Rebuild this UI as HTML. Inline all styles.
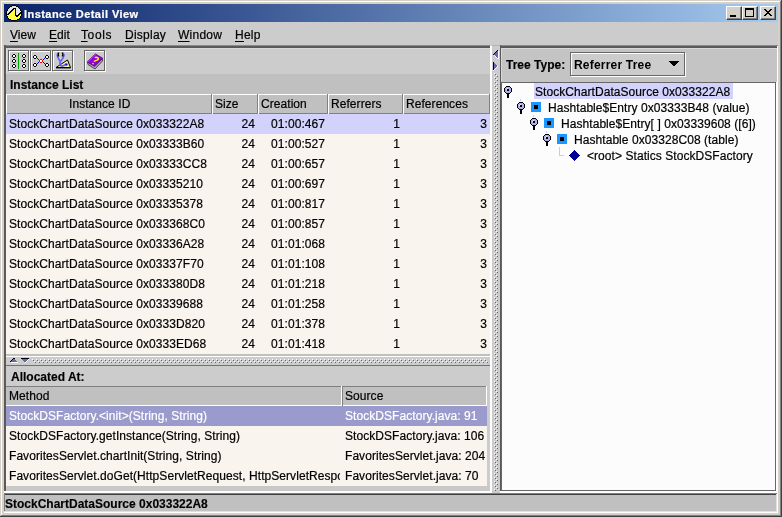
<!DOCTYPE html><html><head><meta charset="utf-8"><style>
html,body{margin:0;padding:0;}
body{width:782px;height:517px;overflow:hidden;position:relative;background:#d4d0c8;font-family:"Liberation Sans",sans-serif;font-size:12px;color:#000;}
#w{position:absolute;left:0;top:0;width:782px;height:517px;will-change:transform;}
div{position:absolute;box-sizing:border-box;}
.t{white-space:pre;line-height:14px;-webkit-text-stroke:0.2px currentColor;letter-spacing:0.06px;}
.u{text-decoration:underline;text-underline-offset:2px;}
</style></head><body><div id="w">
<div style="left:1px;top:1px;width:779px;height:1px;background:#fff;"></div>
<div style="left:1px;top:1px;width:1px;height:514px;background:#fff;"></div>
<div style="left:780px;top:1px;width:1px;height:515px;background:#808080;"></div>
<div style="left:1px;top:515px;width:780px;height:1px;background:#808080;"></div>
<div style="left:781px;top:0px;width:1px;height:517px;background:#404040;"></div>
<div style="left:0px;top:516px;width:782px;height:1px;background:#404040;"></div>
<div style="left:4px;top:4px;width:774px;height:18px;background:linear-gradient(to right,#0a246a,#a6caf0);"></div>
<svg style="position:absolute;left:6px;top:5px" width="16" height="16" viewBox="0 0 16 16" shape-rendering="crispEdges"><path fill="#000" d="M6 0h1v1h-1zM7 0h1v1h-1zM8 0h1v1h-1zM9 0h1v1h-1zM4 1h1v1h-1zM5 1h1v1h-1zM10 1h1v1h-1zM11 1h1v1h-1zM3 2h1v1h-1zM12 2h1v1h-1zM2 3h1v1h-1zM7 3h1v1h-1zM8 3h1v1h-1zM9 3h1v1h-1zM13 3h1v1h-1zM1 4h1v1h-1zM6 4h1v1h-1zM7 4h1v1h-1zM9 4h1v1h-1zM14 4h1v1h-1zM1 5h1v1h-1zM5 5h1v1h-1zM6 5h1v1h-1zM9 5h1v1h-1zM14 5h1v1h-1zM0 6h1v1h-1zM4 6h1v1h-1zM5 6h1v1h-1zM9 6h1v1h-1zM15 6h1v1h-1zM0 7h1v1h-1zM3 7h1v1h-1zM4 7h1v1h-1zM9 7h1v1h-1zM14 7h1v1h-1zM15 7h1v1h-1zM0 8h1v1h-1zM2 8h1v1h-1zM3 8h1v1h-1zM9 8h1v1h-1zM13 8h1v1h-1zM14 8h1v1h-1zM15 8h1v1h-1zM0 9h1v1h-1zM1 9h1v1h-1zM2 9h1v1h-1zM9 9h1v1h-1zM12 9h1v1h-1zM13 9h1v1h-1zM15 9h1v1h-1zM0 10h1v1h-1zM9 10h1v1h-1zM10 10h1v1h-1zM11 10h1v1h-1zM12 10h1v1h-1zM15 10h1v1h-1zM1 11h1v1h-1zM10 11h1v1h-1zM11 11h1v1h-1zM14 11h1v1h-1zM1 12h1v1h-1zM14 12h1v1h-1zM2 13h1v1h-1zM13 13h1v1h-1zM3 14h1v1h-1zM4 14h1v1h-1zM11 14h1v1h-1zM12 14h1v1h-1zM5 15h1v1h-1zM6 15h1v1h-1zM7 15h1v1h-1zM8 15h1v1h-1zM9 15h1v1h-1zM10 15h1v1h-1z"/><path fill="#e4e4e4" d="M6 1h1v1h-1zM7 1h1v1h-1zM8 1h1v1h-1zM9 1h1v1h-1zM4 2h1v1h-1zM5 2h1v1h-1zM6 2h1v1h-1zM7 2h1v1h-1zM8 2h1v1h-1zM9 2h1v1h-1zM10 2h1v1h-1zM11 2h1v1h-1zM3 3h1v1h-1zM4 3h1v1h-1zM5 3h1v1h-1zM6 3h1v1h-1zM10 3h1v1h-1zM11 3h1v1h-1zM12 3h1v1h-1zM2 4h1v1h-1zM3 4h1v1h-1zM4 4h1v1h-1zM5 4h1v1h-1zM10 4h1v1h-1zM11 4h1v1h-1zM12 4h1v1h-1zM13 4h1v1h-1zM2 5h1v1h-1zM3 5h1v1h-1zM4 5h1v1h-1zM10 5h1v1h-1zM11 5h1v1h-1zM12 5h1v1h-1zM13 5h1v1h-1zM1 6h1v1h-1zM2 6h1v1h-1zM3 6h1v1h-1zM10 6h1v1h-1zM11 6h1v1h-1zM12 6h1v1h-1zM13 6h1v1h-1zM14 6h1v1h-1zM1 7h1v1h-1zM2 7h1v1h-1zM10 7h1v1h-1zM11 7h1v1h-1zM12 7h1v1h-1zM13 7h1v1h-1zM1 8h1v1h-1zM10 8h1v1h-1zM11 8h1v1h-1zM12 8h1v1h-1zM10 9h1v1h-1zM11 9h1v1h-1z"/><path fill="#ffff3c" d="M8 4h1v1h-1zM7 5h1v1h-1zM8 5h1v1h-1zM6 6h1v1h-1zM7 6h1v1h-1zM8 6h1v1h-1zM5 7h1v1h-1zM6 7h1v1h-1zM7 7h1v1h-1zM8 7h1v1h-1zM4 8h1v1h-1zM5 8h1v1h-1zM6 8h1v1h-1zM7 8h1v1h-1zM8 8h1v1h-1zM3 9h1v1h-1zM4 9h1v1h-1zM5 9h1v1h-1zM6 9h1v1h-1zM7 9h1v1h-1zM8 9h1v1h-1zM14 9h1v1h-1zM1 10h1v1h-1zM2 10h1v1h-1zM3 10h1v1h-1zM4 10h1v1h-1zM5 10h1v1h-1zM6 10h1v1h-1zM7 10h1v1h-1zM8 10h1v1h-1zM13 10h1v1h-1zM14 10h1v1h-1zM2 11h1v1h-1zM3 11h1v1h-1zM4 11h1v1h-1zM5 11h1v1h-1zM6 11h1v1h-1zM7 11h1v1h-1zM8 11h1v1h-1zM9 11h1v1h-1zM12 11h1v1h-1zM13 11h1v1h-1zM2 12h1v1h-1zM3 12h1v1h-1zM4 12h1v1h-1zM5 12h1v1h-1zM6 12h1v1h-1zM7 12h1v1h-1zM8 12h1v1h-1zM9 12h1v1h-1zM10 12h1v1h-1zM11 12h1v1h-1zM12 12h1v1h-1zM13 12h1v1h-1zM3 13h1v1h-1zM4 13h1v1h-1zM5 13h1v1h-1zM6 13h1v1h-1zM7 13h1v1h-1zM8 13h1v1h-1zM9 13h1v1h-1zM10 13h1v1h-1zM11 13h1v1h-1zM12 13h1v1h-1zM5 14h1v1h-1zM6 14h1v1h-1zM7 14h1v1h-1zM8 14h1v1h-1zM9 14h1v1h-1zM10 14h1v1h-1z"/></svg>
<div class="t" style="left:24px;top:7px;color:#fff;font-weight:bold;font-size:11px;-webkit-text-stroke:0.2px currentColor;letter-spacing:0.45px;">Instance Detail View</div>
<div style="left:726px;top:6px;width:16px;height:14px;background:#d4d0c8;border-top:1px solid #fff;border-left:1px solid #fff;border-right:1px solid #404040;border-bottom:1px solid #404040;box-shadow:inset -1px -1px 0 #808080;"><div style="left:3px;top:8px;width:6px;height:2px;background:#000"></div></div>
<div style="left:742px;top:6px;width:16px;height:14px;background:#d4d0c8;border-top:1px solid #fff;border-left:1px solid #fff;border-right:1px solid #404040;border-bottom:1px solid #404040;box-shadow:inset -1px -1px 0 #808080;"><div style="left:2px;top:1px;width:9px;height:9px;border:1px solid #000;border-top-width:2px"></div></div>
<div style="left:760px;top:6px;width:16px;height:14px;background:#d4d0c8;border-top:1px solid #fff;border-left:1px solid #fff;border-right:1px solid #404040;border-bottom:1px solid #404040;box-shadow:inset -1px -1px 0 #808080;"><svg style="position:absolute;left:3px;top:2px" width="8" height="7" viewBox="0 0 8 7" shape-rendering="crispEdges"><path fill="#000" d="M0 0h1v1h-1zM1 0h1v1h-1zM6 0h1v1h-1zM7 0h1v1h-1zM1 1h1v1h-1zM2 1h1v1h-1zM5 1h1v1h-1zM6 1h1v1h-1zM2 2h1v1h-1zM3 2h1v1h-1zM4 2h1v1h-1zM5 2h1v1h-1zM3 3h1v1h-1zM4 3h1v1h-1zM2 4h1v1h-1zM3 4h1v1h-1zM4 4h1v1h-1zM5 4h1v1h-1zM1 5h1v1h-1zM2 5h1v1h-1zM5 5h1v1h-1zM6 5h1v1h-1zM0 6h1v1h-1zM1 6h1v1h-1zM6 6h1v1h-1zM7 6h1v1h-1z"/></svg></div>
<div style="left:4px;top:22px;width:774px;height:23px;background:#cccccc;"></div>
<div class="t" style="left:10px;top:28px;letter-spacing:0.06px"><span class="u">V</span>iew</div>
<div class="t" style="left:49px;top:28px;letter-spacing:0.06px"><span class="u">E</span>dit</div>
<div class="t" style="left:81px;top:28px;letter-spacing:0.6px"><span class="u">T</span>ools</div>
<div class="t" style="left:125px;top:28px;letter-spacing:0.25px"><span class="u">D</span>isplay</div>
<div class="t" style="left:178px;top:28px;letter-spacing:0.25px"><span class="u">W</span>indow</div>
<div class="t" style="left:235px;top:28px;letter-spacing:0.25px"><span class="u">H</span>elp</div>
<div style="left:4px;top:45px;width:488px;height:448px;background:#cccccc;"></div>
<div style="left:4px;top:45px;width:486px;height:1px;background:#8a8a8a;"></div>
<div style="left:4px;top:46px;width:486px;height:2px;background:#5a5a5a;"></div>
<div style="left:4px;top:45px;width:2px;height:446px;background:#5a5a5a;"></div>
<div style="left:6px;top:48px;width:1px;height:443px;background:#e0e0e0;"></div>
<div style="left:6px;top:48px;width:484px;height:1px;background:#d8d8d8;"></div>
<div style="left:490px;top:46px;width:2px;height:447px;background:#ffffff;"></div>
<div style="left:4px;top:491px;width:488px;height:2px;background:#ffffff;"></div>
<div style="left:8px;top:50px;width:22px;height:22px;"><div style="left:1px;top:1px;width:21px;height:21px;border:1px solid #fff"></div><div style="left:0;top:0;width:21px;height:21px;border:1px solid #666"></div><svg style="position:absolute;left:0;top:0" width="22" height="22" shape-rendering="crispEdges"><path fill="#000" d="M5 4h2v1h-2zM4 5h1v2h-1zM7 5h1v2h-1zM5 7h2v1h-2z"/><path fill="#fff" d="M5 5h2v2h-2z"/><path fill="#000" d="M5 9h2v1h-2zM4 10h1v2h-1zM7 10h1v2h-1zM5 12h2v1h-2z"/><path fill="#fff" d="M5 10h2v2h-2z"/><path fill="#000" d="M5 14h2v1h-2zM4 15h1v2h-1zM7 15h1v2h-1zM5 17h2v1h-2z"/><path fill="#fff" d="M5 15h2v2h-2z"/><path fill="#000" d="M15 4h2v1h-2zM14 5h1v2h-1zM17 5h1v2h-1zM15 7h2v1h-2z"/><path fill="#fff" d="M15 5h2v2h-2z"/><path fill="#000" d="M15 9h2v1h-2zM14 10h1v2h-1zM17 10h1v2h-1zM15 12h2v1h-2z"/><path fill="#fff" d="M15 10h2v2h-2z"/><path fill="#000" d="M15 14h2v1h-2zM14 15h1v2h-1zM17 15h1v2h-1zM15 17h2v1h-2z"/><path fill="#fff" d="M15 15h2v2h-2z"/><rect x="10" y="3" width="1" height="16" fill="#00a000"/></svg></div>
<div style="left:30px;top:50px;width:22px;height:22px;"><div style="left:1px;top:1px;width:21px;height:21px;border:1px solid #fff"></div><div style="left:0;top:0;width:21px;height:21px;border:1px solid #666"></div><svg style="position:absolute;left:0px;top:0px" width="22" height="22" viewBox="0 0 22 22" shape-rendering="crispEdges"><path fill="#000" d="M4 5h1v1h-1zM5 5h1v1h-1zM16 5h1v1h-1zM17 5h1v1h-1zM3 6h1v1h-1zM6 6h1v1h-1zM15 6h1v1h-1zM18 6h1v1h-1zM3 7h1v1h-1zM6 7h1v1h-1zM15 7h1v1h-1zM18 7h1v1h-1zM4 8h1v1h-1zM5 8h1v1h-1zM16 8h1v1h-1zM17 8h1v1h-1zM4 13h1v1h-1zM5 13h1v1h-1zM16 13h1v1h-1zM17 13h1v1h-1zM3 14h1v1h-1zM6 14h1v1h-1zM15 14h1v1h-1zM18 14h1v1h-1zM3 15h1v1h-1zM6 15h1v1h-1zM15 15h1v1h-1zM18 15h1v1h-1zM4 16h1v1h-1zM5 16h1v1h-1zM16 16h1v1h-1zM17 16h1v1h-1z"/><path fill="#fff" d="M4 6h1v1h-1zM5 6h1v1h-1zM16 6h1v1h-1zM17 6h1v1h-1zM4 7h1v1h-1zM5 7h1v1h-1zM16 7h1v1h-1zM17 7h1v1h-1zM10 10h1v1h-1zM11 10h1v1h-1zM10 11h1v1h-1zM11 11h1v1h-1zM4 14h1v1h-1zM5 14h1v1h-1zM16 14h1v1h-1zM17 14h1v1h-1zM4 15h1v1h-1zM5 15h1v1h-1zM16 15h1v1h-1zM17 15h1v1h-1z"/><path fill="#0000ff" d="M7 8h1v1h-1zM14 8h1v1h-1zM8 9h1v1h-1zM13 9h1v1h-1zM8 12h1v1h-1zM13 12h1v1h-1zM7 13h1v1h-1zM14 13h1v1h-1z"/><path fill="#ff0000" d="M10 9h1v1h-1zM11 9h1v1h-1zM9 10h1v1h-1zM12 10h1v1h-1zM9 11h1v1h-1zM12 11h1v1h-1zM10 12h1v1h-1zM11 12h1v1h-1z"/></svg></div>
<div style="left:52px;top:50px;width:22px;height:22px;"><div style="left:1px;top:1px;width:21px;height:21px;border:1px solid #fff"></div><div style="left:0;top:0;width:21px;height:21px;border:1px solid #666"></div><svg style="position:absolute;left:0;top:0" width="22" height="22"><path d="M4 17.5 L18.5 17.5 L15.5 10 Z" fill="#f4f4a0" stroke="#000" stroke-width="1"/><path d="M4 17.8 h14.5" stroke="#000" stroke-width="1.2"/><path d="M5.5 4 C4.5 7 7 9.5 8.5 11.5 C10 9.5 12.5 7 12 4 M8.5 11.5 C7.5 13 7.8 15.5 9 16 C10.5 16.5 13 15 14.5 14" fill="none" stroke="#6060ff" stroke-width="1.6"/><path d="M7.2 3.2 h-1 v2.6 h1 M9.8 3.2 h1 v2.6 h-1" fill="none" stroke="#000" stroke-width="1.3"/><rect x="13.5" y="13.5" width="2" height="2" fill="#0000c0"/></svg></div>
<div style="left:84px;top:50px;width:22px;height:22px;"><div style="left:1px;top:1px;width:21px;height:21px;border:1px solid #fff"></div><div style="left:0;top:0;width:21px;height:21px;border:1px solid #666"></div><svg style="position:absolute;left:0;top:0" width="22" height="22"><path d="M3.5 12.5 L4 14.5 L11 19 L18.5 11 L18.5 9 Z" fill="#a0a0a0" stroke="#404040" stroke-width="0.9"/><path d="M3.2 12 L11.3 4 L18.7 8.3 L10.6 16.2 Z" fill="#9400d8" stroke="#5a0090" stroke-width="0.9"/><path d="M3.5 12.2 L11.3 4.5 L12 5" fill="none" stroke="#c060ff" stroke-width="0.8"/><path d="M10.8 7.8 C12 6.8 15 7.5 14.3 9.3 C13.8 10.6 11 10.8 9.8 11.4" fill="none" stroke="#ffff00" stroke-width="1.4"/><path d="M8.3 13.4 L9.6 13.8" stroke="#ffff00" stroke-width="1.3"/></svg></div>
<div style="left:6px;top:74px;width:484px;height:20px;background:#c0c0c0;"></div>
<div class="t" style="left:10px;top:78px;font-weight:bold;-webkit-text-stroke:0.15px currentColor;letter-spacing:0;">Instance List</div>
<div style="left:6px;top:94px;width:484px;height:20px;background:#c0c0c0;"></div>
<div style="left:6px;top:94px;width:484px;height:1px;background:#fff;"></div>
<div style="left:6px;top:113px;width:484px;height:1px;background:#808080;"></div>
<div style="left:6px;top:94px;width:1px;height:20px;background:#fff;"></div>
<div style="left:211px;top:94px;width:1px;height:20px;background:#808080;"></div>
<div class="t" style="left:69px;top:97px;">Instance ID</div>
<div style="left:212px;top:94px;width:1px;height:20px;background:#fff;"></div>
<div style="left:257px;top:94px;width:1px;height:20px;background:#808080;"></div>
<div class="t" style="left:215px;top:97px;">Size</div>
<div style="left:258px;top:94px;width:1px;height:20px;background:#fff;"></div>
<div style="left:327px;top:94px;width:1px;height:20px;background:#808080;"></div>
<div class="t" style="left:261px;top:97px;">Creation</div>
<div style="left:328px;top:94px;width:1px;height:20px;background:#fff;"></div>
<div style="left:402px;top:94px;width:1px;height:20px;background:#808080;"></div>
<div class="t" style="left:331px;top:97px;">Referrers</div>
<div style="left:403px;top:94px;width:1px;height:20px;background:#fff;"></div>
<div style="left:489px;top:94px;width:1px;height:20px;background:#808080;"></div>
<div class="t" style="left:406px;top:97px;">References</div>
<div style="left:6px;top:114px;width:484px;height:20px;background:#d2d2fc;"></div>
<div class="t" style="left:9px;top:117px;">StockChartDataSource 0x033322A8</div>
<div class="t" style="left:212px;top:117px;width:43px;text-align:right">24</div>
<div class="t" style="left:258px;top:117px;width:67px;text-align:right">01:00:467</div>
<div class="t" style="left:328px;top:117px;width:72px;text-align:right">1</div>
<div class="t" style="left:403px;top:117px;width:84px;text-align:right">3</div>
<div style="left:6px;top:134px;width:484px;height:20px;background:#faf4ee;"></div>
<div class="t" style="left:9px;top:137px;">StockChartDataSource 0x03333B60</div>
<div class="t" style="left:212px;top:137px;width:43px;text-align:right">24</div>
<div class="t" style="left:258px;top:137px;width:67px;text-align:right">01:00:527</div>
<div class="t" style="left:328px;top:137px;width:72px;text-align:right">1</div>
<div class="t" style="left:403px;top:137px;width:84px;text-align:right">3</div>
<div style="left:6px;top:154px;width:484px;height:20px;background:#faf4ee;"></div>
<div class="t" style="left:9px;top:157px;">StockChartDataSource 0x03333CC8</div>
<div class="t" style="left:212px;top:157px;width:43px;text-align:right">24</div>
<div class="t" style="left:258px;top:157px;width:67px;text-align:right">01:00:657</div>
<div class="t" style="left:328px;top:157px;width:72px;text-align:right">1</div>
<div class="t" style="left:403px;top:157px;width:84px;text-align:right">3</div>
<div style="left:6px;top:174px;width:484px;height:20px;background:#faf4ee;"></div>
<div class="t" style="left:9px;top:177px;">StockChartDataSource 0x03335210</div>
<div class="t" style="left:212px;top:177px;width:43px;text-align:right">24</div>
<div class="t" style="left:258px;top:177px;width:67px;text-align:right">01:00:697</div>
<div class="t" style="left:328px;top:177px;width:72px;text-align:right">1</div>
<div class="t" style="left:403px;top:177px;width:84px;text-align:right">3</div>
<div style="left:6px;top:194px;width:484px;height:20px;background:#faf4ee;"></div>
<div class="t" style="left:9px;top:197px;">StockChartDataSource 0x03335378</div>
<div class="t" style="left:212px;top:197px;width:43px;text-align:right">24</div>
<div class="t" style="left:258px;top:197px;width:67px;text-align:right">01:00:817</div>
<div class="t" style="left:328px;top:197px;width:72px;text-align:right">1</div>
<div class="t" style="left:403px;top:197px;width:84px;text-align:right">3</div>
<div style="left:6px;top:214px;width:484px;height:20px;background:#faf4ee;"></div>
<div class="t" style="left:9px;top:217px;">StockChartDataSource 0x033368C0</div>
<div class="t" style="left:212px;top:217px;width:43px;text-align:right">24</div>
<div class="t" style="left:258px;top:217px;width:67px;text-align:right">01:00:857</div>
<div class="t" style="left:328px;top:217px;width:72px;text-align:right">1</div>
<div class="t" style="left:403px;top:217px;width:84px;text-align:right">3</div>
<div style="left:6px;top:234px;width:484px;height:20px;background:#faf4ee;"></div>
<div class="t" style="left:9px;top:237px;">StockChartDataSource 0x03336A28</div>
<div class="t" style="left:212px;top:237px;width:43px;text-align:right">24</div>
<div class="t" style="left:258px;top:237px;width:67px;text-align:right">01:01:068</div>
<div class="t" style="left:328px;top:237px;width:72px;text-align:right">1</div>
<div class="t" style="left:403px;top:237px;width:84px;text-align:right">3</div>
<div style="left:6px;top:254px;width:484px;height:20px;background:#faf4ee;"></div>
<div class="t" style="left:9px;top:257px;">StockChartDataSource 0x03337F70</div>
<div class="t" style="left:212px;top:257px;width:43px;text-align:right">24</div>
<div class="t" style="left:258px;top:257px;width:67px;text-align:right">01:01:108</div>
<div class="t" style="left:328px;top:257px;width:72px;text-align:right">1</div>
<div class="t" style="left:403px;top:257px;width:84px;text-align:right">3</div>
<div style="left:6px;top:274px;width:484px;height:20px;background:#faf4ee;"></div>
<div class="t" style="left:9px;top:277px;">StockChartDataSource 0x033380D8</div>
<div class="t" style="left:212px;top:277px;width:43px;text-align:right">24</div>
<div class="t" style="left:258px;top:277px;width:67px;text-align:right">01:01:218</div>
<div class="t" style="left:328px;top:277px;width:72px;text-align:right">1</div>
<div class="t" style="left:403px;top:277px;width:84px;text-align:right">3</div>
<div style="left:6px;top:294px;width:484px;height:20px;background:#faf4ee;"></div>
<div class="t" style="left:9px;top:297px;">StockChartDataSource 0x03339688</div>
<div class="t" style="left:212px;top:297px;width:43px;text-align:right">24</div>
<div class="t" style="left:258px;top:297px;width:67px;text-align:right">01:01:258</div>
<div class="t" style="left:328px;top:297px;width:72px;text-align:right">1</div>
<div class="t" style="left:403px;top:297px;width:84px;text-align:right">3</div>
<div style="left:6px;top:314px;width:484px;height:20px;background:#faf4ee;"></div>
<div class="t" style="left:9px;top:317px;">StockChartDataSource 0x0333D820</div>
<div class="t" style="left:212px;top:317px;width:43px;text-align:right">24</div>
<div class="t" style="left:258px;top:317px;width:67px;text-align:right">01:01:378</div>
<div class="t" style="left:328px;top:317px;width:72px;text-align:right">1</div>
<div class="t" style="left:403px;top:317px;width:84px;text-align:right">3</div>
<div style="left:6px;top:334px;width:484px;height:20px;background:#faf4ee;"></div>
<div class="t" style="left:9px;top:337px;">StockChartDataSource 0x0333ED68</div>
<div class="t" style="left:212px;top:337px;width:43px;text-align:right">24</div>
<div class="t" style="left:258px;top:337px;width:67px;text-align:right">01:01:418</div>
<div class="t" style="left:328px;top:337px;width:72px;text-align:right">1</div>
<div class="t" style="left:403px;top:337px;width:84px;text-align:right">3</div>
<div style="left:6px;top:354px;width:484px;height:2px;background:#c0c0c0;"></div>
<div style="left:6px;top:356px;width:484px;height:1px;background:#fff;"></div>
<div style="left:6px;top:357px;width:484px;height:8px;background:#cccccc;"></div>
<div style="left:6px;top:365px;width:484px;height:1px;background:#707070;"></div>
<svg style="position:absolute;left:9px;top:358px" width="9" height="5" viewBox="0 0 9 5" shape-rendering="crispEdges"><path fill="#000" d="M4 0h1v1h-1zM5 0h1v1h-1zM3 1h1v1h-1zM2 2h1v1h-1zM1 3h1v1h-1z"/><path fill="#6666aa" d="M4 1h1v1h-1zM5 1h1v1h-1zM3 2h1v1h-1zM4 2h1v1h-1zM5 2h1v1h-1zM6 2h1v1h-1zM2 3h1v1h-1zM3 3h1v1h-1zM4 3h1v1h-1zM5 3h1v1h-1zM6 3h1v1h-1zM7 3h1v1h-1z"/><path fill="#fff" d="M2 4h1v1h-1zM3 4h1v1h-1zM4 4h1v1h-1zM5 4h1v1h-1zM6 4h1v1h-1zM7 4h1v1h-1zM8 4h1v1h-1z"/></svg>
<svg style="position:absolute;left:21px;top:358px" width="9" height="5" viewBox="0 0 9 5" shape-rendering="crispEdges"><path fill="#000" d="M0 0h1v1h-1zM1 0h1v1h-1zM2 0h1v1h-1zM3 0h1v1h-1zM4 0h1v1h-1zM5 0h1v1h-1zM6 0h1v1h-1zM7 0h1v1h-1z"/><path fill="#6666aa" d="M1 1h1v1h-1zM2 1h1v1h-1zM3 1h1v1h-1zM4 1h1v1h-1zM5 1h1v1h-1zM6 1h1v1h-1zM2 2h1v1h-1zM3 2h1v1h-1zM4 2h1v1h-1zM5 2h1v1h-1zM3 3h1v1h-1zM4 3h1v1h-1z"/><path fill="#fff" d="M7 1h1v1h-1zM6 2h1v1h-1zM5 3h1v1h-1zM4 4h1v1h-1z"/></svg>
<svg style="position:absolute;left:32px;top:359px" width="456" height="4" shape-rendering="crispEdges"><defs><pattern id="bh" width="4" height="4" patternUnits="userSpaceOnUse"><rect x="0" y="0" width="1" height="1" fill="#fff"/><rect x="1" y="1" width="1" height="1" fill="#666"/><rect x="2" y="2" width="1" height="1" fill="#fff"/><rect x="3" y="3" width="1" height="1" fill="#666"/></pattern></defs><rect width="456" height="4" fill="url(#bh)"/></svg>
<div style="left:6px;top:366px;width:484px;height:20px;background:#cccccc;"></div>
<div class="t" style="left:11px;top:370px;font-weight:bold;-webkit-text-stroke:0.15px currentColor;letter-spacing:0;">Allocated At:</div>
<div style="left:6px;top:386px;width:481px;height:20px;background:#c0c0c0;"></div>
<div style="left:6px;top:386px;width:481px;height:1px;background:#808080;"></div>
<div style="left:6px;top:405px;width:481px;height:1px;background:#fff;"></div>
<div style="left:341px;top:386px;width:1px;height:20px;background:#fff;"></div>
<div style="left:342px;top:386px;width:1px;height:20px;background:#808080;"></div>
<div style="left:486px;top:386px;width:1px;height:20px;background:#fff;"></div>
<div class="t" style="left:9px;top:389px;">Method</div>
<div class="t" style="left:345px;top:389px;">Source</div>
<div style="left:6px;top:406px;width:481px;height:20px;background:#9a9acc;"></div>
<div class="t" style="left:9px;top:409px;width:331px;overflow:hidden;color:#fff">StockDSFactory.&lt;init&gt;(String, String)</div>
<div class="t" style="left:345px;top:409px;color:#fff">StockDSFactory.java: 91</div>
<div style="left:6px;top:426px;width:481px;height:20px;background:#faf4ee;"></div>
<div class="t" style="left:9px;top:429px;width:331px;overflow:hidden;color:#000">StockDSFactory.getInstance(String, String)</div>
<div class="t" style="left:345px;top:429px;color:#000">StockDSFactory.java: 106</div>
<div style="left:6px;top:446px;width:481px;height:20px;background:#faf4ee;"></div>
<div class="t" style="left:9px;top:449px;width:331px;overflow:hidden;color:#000">FavoritesServlet.chartInit(String, String)</div>
<div class="t" style="left:345px;top:449px;color:#000">FavoritesServlet.java: 204</div>
<div style="left:6px;top:466px;width:481px;height:20px;background:#faf4ee;"></div>
<div class="t" style="left:9px;top:469px;width:331px;overflow:hidden;color:#000">FavoritesServlet.doGet(HttpServletRequest, HttpServletResponse)</div>
<div class="t" style="left:345px;top:469px;color:#000">FavoritesServlet.java: 70</div>
<div style="left:6px;top:486px;width:484px;height:5px;background:#c8c8c8;"></div>
<div style="left:492px;top:45px;width:8px;height:448px;background:#cccccc;"></div>
<svg style="position:absolute;left:493px;top:50px" width="6" height="9" viewBox="0 0 6 9" shape-rendering="crispEdges"><path fill="#000" d="M4 0h1v1h-1zM3 1h1v1h-1zM2 2h1v1h-1zM1 3h1v1h-1zM0 4h1v1h-1z"/><path fill="#6666aa" d="M4 1h1v1h-1zM3 2h1v1h-1zM4 2h1v1h-1zM2 3h1v1h-1zM3 3h1v1h-1zM4 3h1v1h-1zM1 4h1v1h-1zM2 4h1v1h-1zM3 4h1v1h-1zM4 4h1v1h-1zM2 5h1v1h-1zM3 5h1v1h-1zM4 5h1v1h-1zM3 6h1v1h-1zM4 6h1v1h-1zM4 7h1v1h-1z"/><path fill="#fff" d="M5 1h1v1h-1zM5 2h1v1h-1zM5 3h1v1h-1zM5 4h1v1h-1zM1 5h1v1h-1zM5 5h1v1h-1zM2 6h1v1h-1zM5 6h1v1h-1zM3 7h1v1h-1zM5 7h1v1h-1zM4 8h1v1h-1zM5 8h1v1h-1z"/></svg>
<svg style="position:absolute;left:493px;top:62px" width="5" height="9" viewBox="0 0 5 9" shape-rendering="crispEdges"><path fill="#000" d="M0 0h1v1h-1zM0 1h1v1h-1zM0 2h1v1h-1zM0 3h1v1h-1zM0 4h1v1h-1zM0 5h1v1h-1zM0 6h1v1h-1zM0 7h1v1h-1z"/><path fill="#6666aa" d="M1 1h1v1h-1zM1 2h1v1h-1zM2 2h1v1h-1zM1 3h1v1h-1zM2 3h1v1h-1zM3 3h1v1h-1zM1 4h1v1h-1zM2 4h1v1h-1zM3 4h1v1h-1zM1 5h1v1h-1zM2 5h1v1h-1zM1 6h1v1h-1z"/><path fill="#fff" d="M4 4h1v1h-1zM3 5h1v1h-1zM2 6h1v1h-1zM1 7h1v1h-1zM0 8h1v1h-1z"/></svg>
<svg style="position:absolute;left:494px;top:73px" width="4" height="418" shape-rendering="crispEdges"><defs><pattern id="bv" width="4" height="4" patternUnits="userSpaceOnUse"><rect x="0" y="0" width="1" height="1" fill="#fff"/><rect x="1" y="1" width="1" height="1" fill="#666"/><rect x="2" y="2" width="1" height="1" fill="#fff"/><rect x="3" y="3" width="1" height="1" fill="#666"/></pattern></defs><rect width="4" height="418" fill="url(#bv)"/></svg>
<div style="left:500px;top:45px;width:278px;height:448px;background:#c4c4c4;"></div>
<div style="left:492px;top:45px;width:8px;height:1px;background:#b4b4b4;"></div>
<div style="left:500px;top:45px;width:278px;height:1px;background:#8a8a8a;"></div>
<div style="left:500px;top:46px;width:277px;height:2px;background:#5a5a5a;"></div>
<div style="left:500px;top:45px;width:1px;height:447px;background:#5a5a5a;"></div>
<div style="left:501px;top:48px;width:1px;height:34px;background:#d8d8d8;"></div>
<div style="left:501px;top:48px;width:276px;height:1px;background:#d8d8d8;"></div>
<div style="left:777px;top:46px;width:1px;height:447px;background:#fff;"></div>
<div style="left:500px;top:491px;width:278px;height:2px;background:#fff;"></div>
<div class="t" style="left:506px;top:58px;font-weight:bold;-webkit-text-stroke:0.15px currentColor;letter-spacing:0;">Tree Type:</div>
<div style="left:570px;top:52px;width:116px;height:25px;background:#cccccc;"><div style="left:1px;top:1px;width:115px;height:24px;border:1px solid #fff"></div><div style="left:0;top:0;width:115px;height:24px;border:1px solid #666"></div></div>
<div class="t" style="left:574px;top:58px;font-weight:bold;letter-spacing:0.2px;-webkit-text-stroke:0;">Referrer Tree</div>
<svg style="position:absolute;left:669px;top:61px" width="10" height="5" viewBox="0 0 10 5" shape-rendering="crispEdges"><path fill="#000" d="M0 0h1v1h-1zM1 0h1v1h-1zM2 0h1v1h-1zM3 0h1v1h-1zM4 0h1v1h-1zM5 0h1v1h-1zM6 0h1v1h-1zM7 0h1v1h-1zM8 0h1v1h-1zM9 0h1v1h-1zM1 1h1v1h-1zM2 1h1v1h-1zM3 1h1v1h-1zM4 1h1v1h-1zM5 1h1v1h-1zM6 1h1v1h-1zM7 1h1v1h-1zM8 1h1v1h-1zM2 2h1v1h-1zM3 2h1v1h-1zM4 2h1v1h-1zM5 2h1v1h-1zM6 2h1v1h-1zM7 2h1v1h-1zM3 3h1v1h-1zM4 3h1v1h-1zM5 3h1v1h-1zM6 3h1v1h-1zM4 4h1v1h-1zM5 4h1v1h-1z"/></svg>
<div style="left:501px;top:82px;width:276px;height:410px;background:#fcfcfc;"></div>
<div style="left:501px;top:82px;width:275px;height:1px;background:#666;"></div>
<div style="left:501px;top:82px;width:1px;height:409px;background:#666;"></div>
<div style="left:775px;top:82px;width:1px;height:409px;background:#666;"></div>
<div style="left:501px;top:490px;width:275px;height:1px;background:#666;"></div>
<div style="left:776px;top:83px;width:1px;height:408px;background:#fff;"></div>
<div style="left:534px;top:83px;width:199px;height:16px;background:#d2d2fc;"></div>
<svg style="position:absolute;left:504px;top:86px" width="8" height="12" viewBox="0 0 8 12" shape-rendering="crispEdges"><path fill="#000" d="M2 0h1v1h-1zM3 0h1v1h-1zM4 0h1v1h-1zM5 0h1v1h-1zM1 1h1v1h-1zM6 1h1v1h-1zM0 2h1v1h-1zM7 2h1v1h-1zM0 3h1v1h-1zM3 3h1v1h-1zM4 3h1v1h-1zM7 3h1v1h-1zM0 4h1v1h-1zM3 4h1v1h-1zM4 4h1v1h-1zM7 4h1v1h-1zM0 5h1v1h-1zM7 5h1v1h-1zM1 6h1v1h-1zM6 6h1v1h-1zM2 7h1v1h-1zM3 7h1v1h-1zM4 7h1v1h-1zM5 7h1v1h-1zM3 8h1v1h-1zM4 8h1v1h-1zM3 9h1v1h-1zM4 9h1v1h-1zM3 10h1v1h-1zM4 10h1v1h-1zM3 11h1v1h-1zM4 11h1v1h-1z"/><path fill="#b0b0e8" d="M2 1h1v1h-1zM3 1h1v1h-1zM4 1h1v1h-1zM5 1h1v1h-1zM1 2h1v1h-1zM2 2h1v1h-1zM4 2h1v1h-1zM5 2h1v1h-1zM6 2h1v1h-1zM1 3h1v1h-1zM5 3h1v1h-1zM6 3h1v1h-1zM1 4h1v1h-1zM2 4h1v1h-1zM5 4h1v1h-1zM6 4h1v1h-1zM1 5h1v1h-1zM2 5h1v1h-1zM3 5h1v1h-1zM4 5h1v1h-1zM5 5h1v1h-1zM6 5h1v1h-1zM2 6h1v1h-1zM3 6h1v1h-1zM4 6h1v1h-1zM5 6h1v1h-1z"/><path fill="#e8e8ff" d="M3 2h1v1h-1zM2 3h1v1h-1z"/></svg>
<div class="t" style="left:535px;top:85px;">StockChartDataSource 0x033322A8</div>
<svg style="position:absolute;left:517px;top:102px" width="8" height="12" viewBox="0 0 8 12" shape-rendering="crispEdges"><path fill="#000" d="M2 0h1v1h-1zM3 0h1v1h-1zM4 0h1v1h-1zM5 0h1v1h-1zM1 1h1v1h-1zM6 1h1v1h-1zM0 2h1v1h-1zM7 2h1v1h-1zM0 3h1v1h-1zM3 3h1v1h-1zM4 3h1v1h-1zM7 3h1v1h-1zM0 4h1v1h-1zM3 4h1v1h-1zM4 4h1v1h-1zM7 4h1v1h-1zM0 5h1v1h-1zM7 5h1v1h-1zM1 6h1v1h-1zM6 6h1v1h-1zM2 7h1v1h-1zM3 7h1v1h-1zM4 7h1v1h-1zM5 7h1v1h-1zM3 8h1v1h-1zM4 8h1v1h-1zM3 9h1v1h-1zM4 9h1v1h-1zM3 10h1v1h-1zM4 10h1v1h-1zM3 11h1v1h-1zM4 11h1v1h-1z"/><path fill="#b0b0e8" d="M2 1h1v1h-1zM3 1h1v1h-1zM4 1h1v1h-1zM5 1h1v1h-1zM1 2h1v1h-1zM2 2h1v1h-1zM4 2h1v1h-1zM5 2h1v1h-1zM6 2h1v1h-1zM1 3h1v1h-1zM5 3h1v1h-1zM6 3h1v1h-1zM1 4h1v1h-1zM2 4h1v1h-1zM5 4h1v1h-1zM6 4h1v1h-1zM1 5h1v1h-1zM2 5h1v1h-1zM3 5h1v1h-1zM4 5h1v1h-1zM5 5h1v1h-1zM6 5h1v1h-1zM2 6h1v1h-1zM3 6h1v1h-1zM4 6h1v1h-1zM5 6h1v1h-1z"/><path fill="#e8e8ff" d="M3 2h1v1h-1zM2 3h1v1h-1z"/></svg>
<div style="left:520px;top:99px;width:1px;height:2px;background:#c8c8ff;"></div>
<div style="left:531px;top:102px;width:10px;height:10px;background:#1e96ff"><div style="left:3px;top:3px;width:4px;height:4px;background:#000"></div></div>
<div class="t" style="left:548px;top:101px;">Hashtable$Entry 0x03333B48 (value)</div>
<svg style="position:absolute;left:530px;top:118px" width="8" height="12" viewBox="0 0 8 12" shape-rendering="crispEdges"><path fill="#000" d="M2 0h1v1h-1zM3 0h1v1h-1zM4 0h1v1h-1zM5 0h1v1h-1zM1 1h1v1h-1zM6 1h1v1h-1zM0 2h1v1h-1zM7 2h1v1h-1zM0 3h1v1h-1zM3 3h1v1h-1zM4 3h1v1h-1zM7 3h1v1h-1zM0 4h1v1h-1zM3 4h1v1h-1zM4 4h1v1h-1zM7 4h1v1h-1zM0 5h1v1h-1zM7 5h1v1h-1zM1 6h1v1h-1zM6 6h1v1h-1zM2 7h1v1h-1zM3 7h1v1h-1zM4 7h1v1h-1zM5 7h1v1h-1zM3 8h1v1h-1zM4 8h1v1h-1zM3 9h1v1h-1zM4 9h1v1h-1zM3 10h1v1h-1zM4 10h1v1h-1zM3 11h1v1h-1zM4 11h1v1h-1z"/><path fill="#b0b0e8" d="M2 1h1v1h-1zM3 1h1v1h-1zM4 1h1v1h-1zM5 1h1v1h-1zM1 2h1v1h-1zM2 2h1v1h-1zM4 2h1v1h-1zM5 2h1v1h-1zM6 2h1v1h-1zM1 3h1v1h-1zM5 3h1v1h-1zM6 3h1v1h-1zM1 4h1v1h-1zM2 4h1v1h-1zM5 4h1v1h-1zM6 4h1v1h-1zM1 5h1v1h-1zM2 5h1v1h-1zM3 5h1v1h-1zM4 5h1v1h-1zM5 5h1v1h-1zM6 5h1v1h-1zM2 6h1v1h-1zM3 6h1v1h-1zM4 6h1v1h-1zM5 6h1v1h-1z"/><path fill="#e8e8ff" d="M3 2h1v1h-1zM2 3h1v1h-1z"/></svg>
<div style="left:533px;top:115px;width:1px;height:2px;background:#c8c8ff;"></div>
<div style="left:544px;top:118px;width:10px;height:10px;background:#1e96ff"><div style="left:3px;top:3px;width:4px;height:4px;background:#000"></div></div>
<div class="t" style="left:561px;top:117px;">Hashtable$Entry[ ] 0x03339608 ([6])</div>
<svg style="position:absolute;left:543px;top:134px" width="8" height="12" viewBox="0 0 8 12" shape-rendering="crispEdges"><path fill="#000" d="M2 0h1v1h-1zM3 0h1v1h-1zM4 0h1v1h-1zM5 0h1v1h-1zM1 1h1v1h-1zM6 1h1v1h-1zM0 2h1v1h-1zM7 2h1v1h-1zM0 3h1v1h-1zM3 3h1v1h-1zM4 3h1v1h-1zM7 3h1v1h-1zM0 4h1v1h-1zM3 4h1v1h-1zM4 4h1v1h-1zM7 4h1v1h-1zM0 5h1v1h-1zM7 5h1v1h-1zM1 6h1v1h-1zM6 6h1v1h-1zM2 7h1v1h-1zM3 7h1v1h-1zM4 7h1v1h-1zM5 7h1v1h-1zM3 8h1v1h-1zM4 8h1v1h-1zM3 9h1v1h-1zM4 9h1v1h-1zM3 10h1v1h-1zM4 10h1v1h-1zM3 11h1v1h-1zM4 11h1v1h-1z"/><path fill="#b0b0e8" d="M2 1h1v1h-1zM3 1h1v1h-1zM4 1h1v1h-1zM5 1h1v1h-1zM1 2h1v1h-1zM2 2h1v1h-1zM4 2h1v1h-1zM5 2h1v1h-1zM6 2h1v1h-1zM1 3h1v1h-1zM5 3h1v1h-1zM6 3h1v1h-1zM1 4h1v1h-1zM2 4h1v1h-1zM5 4h1v1h-1zM6 4h1v1h-1zM1 5h1v1h-1zM2 5h1v1h-1zM3 5h1v1h-1zM4 5h1v1h-1zM5 5h1v1h-1zM6 5h1v1h-1zM2 6h1v1h-1zM3 6h1v1h-1zM4 6h1v1h-1zM5 6h1v1h-1z"/><path fill="#e8e8ff" d="M3 2h1v1h-1zM2 3h1v1h-1z"/></svg>
<div style="left:546px;top:131px;width:1px;height:2px;background:#c8c8ff;"></div>
<div style="left:557px;top:134px;width:10px;height:10px;background:#1e96ff"><div style="left:3px;top:3px;width:4px;height:4px;background:#000"></div></div>
<div class="t" style="left:574px;top:133px;">Hashtable 0x03328C08 (table)</div>
<div style="left:559px;top:147px;width:1px;height:9px;background:#c8c8ff;"></div>
<div style="left:559px;top:155px;width:5px;height:1px;background:#c8c8ff;"></div>
<svg style="position:absolute;left:569px;top:150px" width="11" height="11" viewBox="0 0 11 11" shape-rendering="crispEdges"><path fill="#000099" d="M5 0h1v1h-1zM4 1h1v1h-1zM5 1h1v1h-1zM6 1h1v1h-1zM3 2h1v1h-1zM4 2h1v1h-1zM5 2h1v1h-1zM6 2h1v1h-1zM7 2h1v1h-1zM2 3h1v1h-1zM3 3h1v1h-1zM4 3h1v1h-1zM5 3h1v1h-1zM6 3h1v1h-1zM7 3h1v1h-1zM8 3h1v1h-1zM1 4h1v1h-1zM2 4h1v1h-1zM3 4h1v1h-1zM4 4h1v1h-1zM5 4h1v1h-1zM6 4h1v1h-1zM7 4h1v1h-1zM8 4h1v1h-1zM9 4h1v1h-1zM0 5h1v1h-1zM1 5h1v1h-1zM2 5h1v1h-1zM3 5h1v1h-1zM4 5h1v1h-1zM5 5h1v1h-1zM6 5h1v1h-1zM7 5h1v1h-1zM8 5h1v1h-1zM9 5h1v1h-1zM10 5h1v1h-1zM1 6h1v1h-1zM2 6h1v1h-1zM3 6h1v1h-1zM4 6h1v1h-1zM5 6h1v1h-1zM6 6h1v1h-1zM7 6h1v1h-1zM8 6h1v1h-1zM9 6h1v1h-1zM2 7h1v1h-1zM3 7h1v1h-1zM4 7h1v1h-1zM5 7h1v1h-1zM6 7h1v1h-1zM7 7h1v1h-1zM8 7h1v1h-1zM3 8h1v1h-1zM4 8h1v1h-1zM5 8h1v1h-1zM6 8h1v1h-1zM7 8h1v1h-1zM4 9h1v1h-1zM5 9h1v1h-1zM6 9h1v1h-1zM5 10h1v1h-1z"/></svg>
<div class="t" style="left:587px;top:149px;">&lt;root&gt; Statics StockDSFactory</div>
<div style="left:4px;top:493px;width:774px;height:20px;background:#c0c0c0;"></div>
<div style="left:4px;top:493px;width:773px;height:1px;background:#808080;"></div>
<div style="left:4px;top:494px;width:772px;height:1px;background:#404040;"></div>
<div style="left:4px;top:493px;width:1px;height:19px;background:#808080;"></div>
<div style="left:776px;top:494px;width:1px;height:18px;background:#e0e0e0;"></div>
<div style="left:777px;top:493px;width:1px;height:20px;background:#fff;"></div>
<div style="left:4px;top:511px;width:773px;height:1px;background:#e0e0e0;"></div>
<div style="left:4px;top:512px;width:774px;height:1px;background:#fff;"></div>
<div class="t" style="left:5px;top:497px;font-weight:bold;-webkit-text-stroke:0.15px currentColor;letter-spacing:0;">StockChartDataSource 0x033322A8</div>
</div></body></html>
